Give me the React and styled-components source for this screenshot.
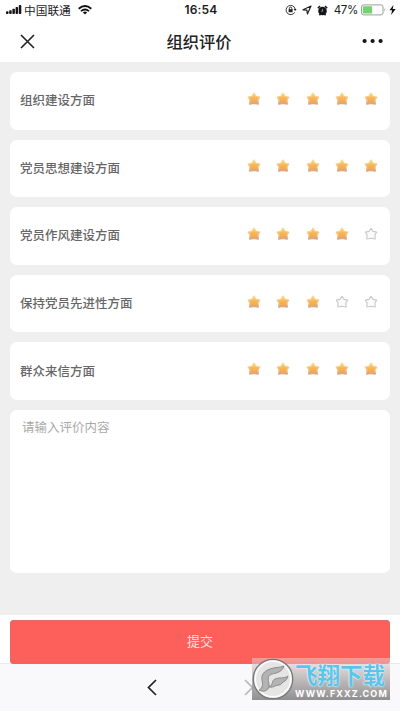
import React from "react";
import styled, { createGlobalStyle } from "styled-components";

const GlobalStyle = createGlobalStyle`
  * { box-sizing: border-box; }
  body {
    margin: 0;
    background: #fff;
    font-family: Inter, "Noto Sans CJK SC", sans-serif;
  }
`;

const Screen = styled.div`
  width: 400px;
  height: 711px;
  display: flex;
  flex-direction: column;
  overflow: hidden;
  background: #fff;
`;

const StatusBar = styled.header`
  height: 20px;
  flex: none;
  display: grid;
  grid-template-columns: 1fr auto 1fr;
  align-items: center;
  padding: 0 4px 0 6px;
  color: #1c1c1c;
  font-size: 12px;
  line-height: 20px;
`;

const StatusGroup = styled.div`
  display: flex;
  align-items: center;
  justify-content: ${(p) => (p.$end ? "flex-end" : "flex-start")};
  svg { flex: none; }
`;

const Carrier = styled.span`
  font-family: "Noto Sans CJK SC", sans-serif;
  font-size: 11.7px;
  margin: 0 7px 0 2px;
`;

const Clock = styled.span`
  font-size: 12px;
  font-weight: 600;
  letter-spacing: 0.15px;
`;

const Percent = styled.span`
  font-size: 11.6px;
  margin: 0 3px 0 6px;
  letter-spacing: -0.4px;
`;

const NavBar = styled.nav`
  height: 42px;
  flex: none;
  display: grid;
  grid-template-columns: 1fr auto 1fr;
  align-items: center;
  padding: 0 17px 0 20px;
`;

const Title = styled.h1`
  margin: 0 4px 0 -1px;
  font-family: "Noto Sans CJK SC", sans-serif;
  font-size: 16.3px;
  line-height: 24px;
  font-weight: 500;
  color: #222;
`;

const IconButton = styled.button`
  display: flex;
  padding: 0;
  border: 0;
  background: none;
  justify-self: ${(p) => (p.$end ? "end" : "start")};
`;

const Content = styled.main`
  height: 553px;
  flex: none;
  display: flex;
  flex-direction: column;
  gap: 10px;
  padding: 10px;
  background: #efefef;
`;

const RatingCard = styled.section`
  height: 57.6px;
  flex: none;
  display: flex;
  align-items: center;
  justify-content: space-between;
  padding: 0 11.8px 0 10px;
  border-radius: 7px;
  background: #fff;
`;

const Label = styled.span`
  font-family: "Noto Sans CJK SC", sans-serif;
  font-size: 12.5px;
  line-height: 18px;
  font-weight: 500;
  color: #666;
  padding-bottom: 1px;
`;

const Stars = styled.div`
  display: flex;
  gap: 15.3px;
  padding-bottom: 4px;
`;

const Comment = styled.textarea`
  height: 163px;
  flex: none;
  display: block;
  width: 100%;
  padding: 8px 12px;
  border: 0;
  border-radius: 7px;
  resize: none;
  outline: none;
  background: #fff;
  font-family: "Noto Sans CJK SC", sans-serif;
  font-size: 12.5px;
  line-height: 18px;
  &::placeholder { color: #aaa; opacity: 1; }
`;

const SubmitArea = styled.div`
  height: 49px;
  flex: none;
  padding: 5px 10px 0;
  border-bottom: 1px solid #e9e9eb;
`;

const Submit = styled.button`
  display: block;
  width: 100%;
  height: 44px;
  padding: 0 0 3px;
  border: 1px solid #dd6c67;
  border-radius: 3px;
  background: #fd5f5a;
  color: #ffdedb;
  font-family: "Noto Sans CJK SC", sans-serif;
  font-size: 13px;
`;

const BottomBar = styled.footer`
  position: relative;
  flex: 1;
  display: flex;
  gap: 87px;
  align-items: flex-start;
  padding: 15px 0 0 147px;
  background: #f9f9fb;
`;

const Watermark = styled.div`
  position: absolute;
  left: 252px;
  top: -6px;
  width: 138px;
  height: 42px;
  display: flex;
  align-items: flex-start;
  background: linear-gradient(rgba(235, 215, 215, 0.5), rgba(125, 125, 125, 0.85));
  svg { flex: none; }
`;

const WatermarkText = styled.div`
  display: flex;
  flex-direction: column;
  align-items: flex-start;
  margin: 4px 0 0 1px;
`;

const WatermarkName = styled.span`
  font-family: "Noto Sans CJK SC", sans-serif;
  font-size: 22.5px;
  line-height: 25px;
  height: 26px;
  font-weight: 700;
  color: #5cc4ea;
  white-space: nowrap;
  text-shadow: 0 0 1px #fff, 0 0 2px #e5f7ff;
`;

const WatermarkUrl = styled.span`
  font-family: Inter, sans-serif;
  font-size: 9px;
  line-height: 11px;
  font-weight: 700;
  letter-spacing: 1.1px;
  color: #fff;
  white-space: nowrap;
`;

const ratings = [
  { label: "组织建设方面", score: 5 },
  { label: "党员思想建设方面", score: 5 },
  { label: "党员作风建设方面", score: 4 },
  { label: "保持党员先进性方面", score: 3 },
  { label: "群众来信方面", score: 5 },
];

const starPath =
  "M7 1.2 L9 4.4 L12.7 5.1 L10.9 8 L11.2 12 L7 11.2 L2.8 12 L3.1 8 L1.3 5.1 L5 4.4 Z";

function Star({ filled }) {
  return (
    <svg width="14" height="14" viewBox="0 0 14 14">
      <path
        d={starPath}
        fill={filled ? "url(#starFill)" : "#fbfbfb"}
        stroke={filled ? "url(#starEdge)" : "#c8c8c8"}
        strokeWidth={filled ? 1.4 : 1.1}
        strokeLinejoin="round"
      />
    </svg>
  );
}

function StarGradients() {
  return (
    <defs>
      <linearGradient id="starFill" x1="0" y1="0" x2="0" y2="1">
        <stop offset="0" stopColor="#fad064" />
        <stop offset="0.5" stopColor="#f5b557" />
        <stop offset="1" stopColor="#eba05c" />
      </linearGradient>
      <linearGradient id="starEdge" x1="0" y1="0" x2="0" y2="1">
        <stop offset="0" stopColor="#fcd98a" />
        <stop offset="0.6" stopColor="#f3c283" />
        <stop offset="1" stopColor="#d8a482" />
      </linearGradient>
    </defs>
  );
}

const GradientSheet = styled.svg`
  position: absolute;
`;

const SignalIcon = () => (
  <svg width="16" height="10" viewBox="0 0 16 10" fill="#161616">
    <rect x="0" y="6.3" width="2.5" height="2.7" rx="0.7" />
    <rect x="3.2" y="5.3" width="2.5" height="3.7" rx="0.7" />
    <rect x="6.4" y="3.8" width="2.5" height="5.2" rx="0.7" />
    <rect x="9.6" y="2" width="2.5" height="7" rx="0.7" />
    <rect x="12.8" y="0" width="2.5" height="9" rx="0.7" />
  </svg>
);

const WifiIcon = () => (
  <svg width="14" height="10" viewBox="0 0 14 10" fill="none" stroke="#111" strokeWidth="1.9">
    <path d="M0.7 3.7 Q7 -1.7 13.3 3.7" />
    <path d="M3 6.1 Q7 2.7 11 6.1" />
    <path d="M4.9 7.4 Q7 5.7 9.1 7.4 L7 9.6 Z" fill="#111" stroke="none" />
  </svg>
);

const LockIcon = () => (
  <svg width="12" height="12" viewBox="0 0 12 12" fill="none" stroke="#222" strokeWidth="0.9">
    <path d="M9.7 8.3 A4.6 4.6 0 1 1 10.2 5" />
    <path d="M8.5 5 H11.7 L10.1 7 Z" fill="#222" stroke="none" />
    <rect x="3.6" y="5.2" width="4" height="3" fill="#222" stroke="none" />
    <path d="M4.4 5.5 V4.3 A1.2 1.2 0 0 1 6.8 4.3 V5.5" />
  </svg>
);

const LocationIcon = () => (
  <svg width="10" height="10" viewBox="0 0 10 10" fill="none" stroke="#222" strokeWidth="1.2" strokeLinejoin="round">
    <path d="M9 1 L1 4.8 L4.9 5.2 L5.4 9 Z" />
  </svg>
);

const AlarmIcon = () => (
  <svg width="11" height="11" viewBox="0 0 11 11">
    <circle cx="5.5" cy="6" r="4.3" fill="#151515" />
    <path d="M0.8 3.2 L3 1.1 M8 1.1 L10.2 3.2 M2.4 10.3 L3.5 9 M8.6 10.3 L7.5 9" stroke="#151515" strokeWidth="1.5" />
    <path d="M5.6 3.8 V6.2 H4" fill="none" stroke="#bbb" strokeWidth="0.7" />
  </svg>
);

const BatteryIcon = () => (
  <svg width="28" height="12" viewBox="0 0 28 12">
    <rect x="0.5" y="0.9" width="21.5" height="10" rx="2" fill="#fff" stroke="#858585" strokeWidth="0.8" />
    <rect x="1.8" y="2.2" width="9.3" height="7.4" rx="0.6" fill="#72d46e" />
    <path d="M23.5 4 Q25 5.9 23.5 7.8 Z" fill="#858585" />
  </svg>
);

const BoltIcon = () => (
  <svg width="7" height="10" viewBox="0 0 7 10">
    <path d="M4.5 0 L0.4 5.3 H3.1 L2.1 10 L6.7 4 H3.7 Z" fill="#111" />
  </svg>
);

const CloseIcon = () => (
  <svg width="15" height="15" viewBox="0 0 15 15">
    <path d="M1 1 L14 14 M14 1 L1 14" stroke="#222" strokeWidth="1.6" />
  </svg>
);

const MoreIcon = () => (
  <svg width="21" height="6" viewBox="0 0 21 6" fill="#161616">
    <circle cx="2.6" cy="3" r="2.1" />
    <circle cx="10.6" cy="3" r="2.1" />
    <circle cx="18.6" cy="3" r="2.1" />
  </svg>
);

const Chevron = ({ forward }) => (
  <svg width="10" height="17" viewBox="0 0 10 17" fill="none" strokeWidth="1.7">
    <path
      d={forward ? "M1 1 L8.5 8.5 L1 16" : "M9 1 L1.5 8.5 L9 16"}
      stroke={forward ? "#b7b7bc" : "#222"}
    />
  </svg>
);

const Emblem = () => (
  <svg width="42" height="42" viewBox="0 0 42 42">
    <circle cx="21" cy="21" r="19.7" fill="#e6e5e5" stroke="#777" strokeWidth="1.3" />
    <circle cx="21" cy="21" r="17.8" fill="none" stroke="#fafafa" strokeWidth="1.6" />
    <path
      d="M32 8 C27 10 23 9 18 11 C12 13 9 17 10 22 C11 26 11 30 7 32 C12 35 18 32 17 26 C16 21 15 18 20 16 C25 15 30 14 32 8 Z"
      fill="#b4b3b3"
      stroke="#858585"
      strokeWidth="0.9"
    />
    <path
      d="M36 18 C32 21 27 19 23 21 C19 23 22 26 17 29 C22 30 23 27 27 27 C29 27 30 25 31 24 C34 23 35 21 36 18 Z"
      fill="#b4b3b3"
      stroke="#858585"
      strokeWidth="0.9"
    />
  </svg>
);

const StatusIcons = styled.div`
  display: flex;
  align-items: center;
  gap: 5px;
`;

export default function App() {
  return (
    <Screen>
      <GlobalStyle />
      <StatusBar>
        <StatusGroup>
          <SignalIcon />
          <Carrier>中国联通</Carrier>
          <WifiIcon />
        </StatusGroup>
        <Clock>16:54</Clock>
        <StatusGroup $end>
          <StatusIcons>
            <LockIcon />
            <LocationIcon />
            <AlarmIcon />
          </StatusIcons>
          <Percent>47%</Percent>
          <BatteryIcon />
          <BoltIcon />
        </StatusGroup>
      </StatusBar>
      <NavBar>
        <IconButton aria-label="关闭">
          <CloseIcon />
        </IconButton>
        <Title>组织评价</Title>
        <IconButton $end aria-label="更多">
          <MoreIcon />
        </IconButton>
      </NavBar>
      <Content>
        {ratings.map((item, row) => (
          <RatingCard key={item.label}>
            <Label>{item.label}</Label>
            <Stars>
              {row === 0 && (
                <GradientSheet width="0" height="0">
                  <StarGradients />
                </GradientSheet>
              )}
              {[1, 2, 3, 4, 5].map((n) => (
                <Star key={n} filled={n <= item.score} />
              ))}
            </Stars>
          </RatingCard>
        ))}
        <Comment placeholder="请输入评价内容" />
      </Content>
      <SubmitArea>
        <Submit>提交</Submit>
      </SubmitArea>
      <BottomBar>
        <Chevron />
        <Chevron forward />
        <Watermark>
          <Emblem />
          <WatermarkText>
            <WatermarkName>飞翔下载</WatermarkName>
            <WatermarkUrl>WWW.FXXZ.COM</WatermarkUrl>
          </WatermarkText>
        </Watermark>
      </BottomBar>
    </Screen>
  );
}
